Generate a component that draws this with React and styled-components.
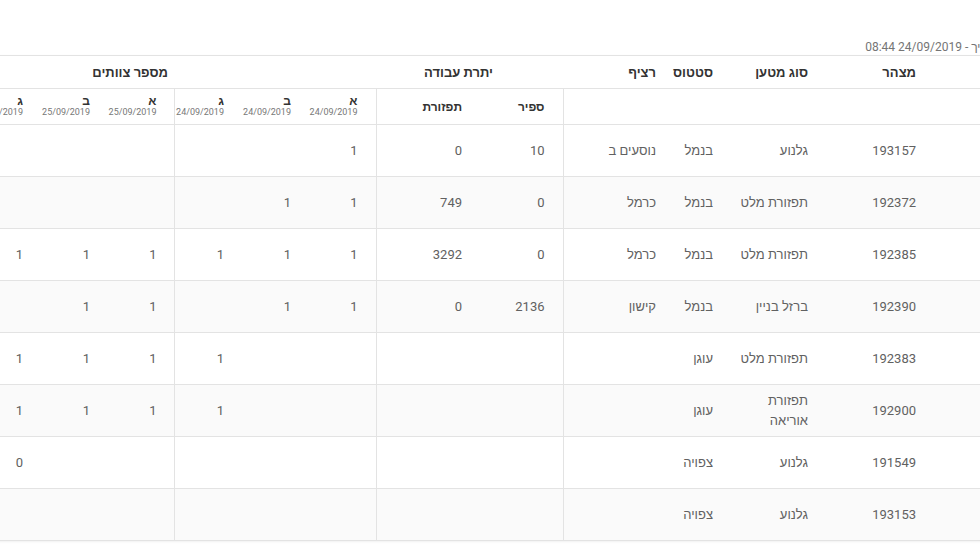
import React from 'react';
import styled, { createGlobalStyle } from 'styled-components';

const GlobalStyle = createGlobalStyle`
  html, body { margin: 0; padding: 0; background: #fff; }
  body { font-family: Roboto, "Liberation Sans", Arial, sans-serif; }
`;

const Page = styled.div`
  width: 980px;
  height: 550px;
  overflow: hidden;
  direction: rtl;
  background: #fff;
`;

// the sheet is wider than the window, it bleeds out on both sides
const Frame = styled.div`
  width: 1026px;
  margin-right: -20px;
`;

const DateLine = styled.div`
  padding-top: 40px;
  margin-right: -29px;
  height: 15px;
  line-height: 15px;
  font-size: 12px;
  color: #757575;
  white-space: nowrap;
`;

const Sheet = styled.table`
  width: 100%;
  table-layout: fixed;
  border-collapse: collapse;
  box-shadow: 0 1px 2px rgba(0, 0, 0, 0.06);
`;

const Col = styled.col`
  width: ${p => p.$w}px;
`;

const GroupCell = styled.th`
  height: 32px;
  padding: 0 ${p => p.$pr ?? 18}px 0 4px;
  border-top: 1px solid #e3e3e3;
  border-bottom: 1px solid #e3e3e3;
  text-align: right;
  vertical-align: middle;
  font-size: 13px;
  font-weight: 700;
  color: #333;
  white-space: nowrap;
`;

const SubCell = styled.th`
  height: 35px;
  padding: 0 18px 0 4px;
  border-bottom: 1px solid #e3e3e3;
  border-left: ${p => (p.$divide ? '1px solid #e3e3e3' : 'none')};
  text-align: right;
  vertical-align: middle;
  font-size: 12px;
  font-weight: 700;
  color: #333;
`;

const DayLetter = styled.div`
  font-size: 12px;
  line-height: 12px;
  font-weight: 700;
  color: #333;
`;

const DayDate = styled.div`
  font-size: 9px;
  line-height: 11px;
  font-weight: 400;
  color: #777;
`;

const Row = styled.tr`
  &:nth-child(even) { background: #fafafa; }
`;

const Cell = styled.td`
  height: 51px;
  padding: 0 18px 0 4px;
  border-bottom: 1px solid #e3e3e3;
  border-left: ${p => (p.$divide ? '1px solid #e3e3e3' : 'none')};
  text-align: right;
  vertical-align: middle;
  font-size: 13px;
  line-height: 20px;
  color: #616161;
`;

const widths = [66, 108, 95, 57, 111, 83, 104, 67, 67, 67, 67, 67, 67];
const dividers = [4, 6, 9];

const days = [
  { letter: 'א', date: '24/09/2019' },
  { letter: 'ב', date: '24/09/2019' },
  { letter: 'ג', date: '24/09/2019' },
  { letter: 'א', date: '25/09/2019' },
  { letter: 'ב', date: '25/09/2019' },
  { letter: 'ג', date: '25/09/2019' },
];

const rows = [
  { id: '193157', cargo: 'גלנוע', status: 'בנמל', dock: 'נוסעים ב', sapir: '10', spread: '0', teams: ['1', '', '', '', '', ''] },
  { id: '192372', cargo: 'תפזורת מלט', status: 'בנמל', dock: 'כרמל', sapir: '0', spread: '749', teams: ['1', '1', '', '', '', ''] },
  { id: '192385', cargo: 'תפזורת מלט', status: 'בנמל', dock: 'כרמל', sapir: '0', spread: '3292', teams: ['1', '1', '1', '1', '1', '1'] },
  { id: '192390', cargo: 'ברזל בניין', status: 'בנמל', dock: 'קישון', sapir: '2136', spread: '0', teams: ['1', '1', '', '1', '1', ''] },
  { id: '192383', cargo: 'תפזורת מלט', status: 'עוגן', dock: '', sapir: '', spread: '', teams: ['', '', '1', '1', '1', '1'] },
  { id: '192900', cargo: 'תפזורת אוריאה', status: 'עוגן', dock: '', sapir: '', spread: '', teams: ['', '', '1', '1', '1', '1'] },
  { id: '191549', cargo: 'גלנוע', status: 'צפויה', dock: '', sapir: '', spread: '', teams: ['', '', '', '', '', '0'] },
  { id: '193153', cargo: 'גלנוע', status: 'צפויה', dock: '', sapir: '', spread: '', teams: ['', '', '', '', '', ''] },
];

export default function App() {
  return (
    <Page>
      <GlobalStyle />
      <Frame>
        <DateLine>נכון לתאריך - 24/09/2019 08:44</DateLine>
        <Sheet>
          <colgroup>
            {widths.map((w, i) => <Col key={i} $w={w} />)}
          </colgroup>
          <thead>
            <tr>
              <GroupCell />
              <GroupCell>מצהר</GroupCell>
              <GroupCell>סוג מטען</GroupCell>
              <GroupCell>סטטוס</GroupCell>
              <GroupCell>רציף</GroupCell>
              <GroupCell colSpan={2} $pr={70}>יתרת עבודה</GroupCell>
              <GroupCell colSpan={3} />
              <GroupCell colSpan={3} $pr={7}>מספר צוותים</GroupCell>
            </tr>
            <tr>
              <SubCell />
              <SubCell />
              <SubCell />
              <SubCell />
              <SubCell $divide>{''}</SubCell>
              <SubCell>ספיר</SubCell>
              <SubCell $divide>תפזורת</SubCell>
              {days.map((d, i) => (
                <SubCell key={i} $divide={dividers.includes(i + 7)}>
                  <DayLetter>{d.letter}</DayLetter>
                  <DayDate>{d.date}</DayDate>
                </SubCell>
              ))}
            </tr>
          </thead>
          <tbody>
            {rows.map(r => (
              <Row key={r.id}>
                <Cell />
                <Cell>{r.id}</Cell>
                <Cell>{r.cargo}</Cell>
                <Cell>{r.status}</Cell>
                <Cell $divide>{r.dock}</Cell>
                <Cell>{r.sapir}</Cell>
                <Cell $divide>{r.spread}</Cell>
                {r.teams.map((t, i) => (
                  <Cell key={i} $divide={dividers.includes(i + 7)}>{t}</Cell>
                ))}
              </Row>
            ))}
          </tbody>
        </Sheet>
      </Frame>
    </Page>
  );
}
